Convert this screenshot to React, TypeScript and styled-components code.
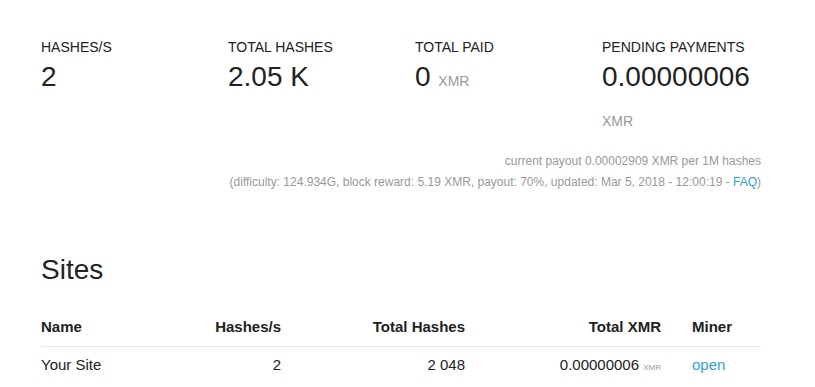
import styled, { createGlobalStyle } from "styled-components";

const GlobalStyle = createGlobalStyle`
    body {
        margin: 0;
        background: #fff;
        font-family: "Liberation Sans", Arial, sans-serif;
        font-size: 14px;
        line-height: 20px;
        color: #222;
    }
`;

const Page = styled.div`
    width: 720px;
    padding: 37px 0 0 41px;
`;

const Stats = styled.div`
    display: grid;
    grid-template-columns: 187px 187px 187px 187px;
    margin-right: -28px;
`;

const Stat = styled.div`
    padding-right: 15px;
`;

const Label = styled.div`
    font-size: 14px;
    line-height: 20px;
    text-transform: uppercase;
`;

const Value = styled.div`
    font-size: 28px;
    line-height: 40px;
`;

const Unit = styled.small<{ $size?: number }>`
    font-size: ${(p) => p.$size ?? 14}px;
    color: #999;
`;

const Payout = styled.div`
    margin-top: 10px;
    text-align: right;
    font-size: 12px;
    line-height: 21px;
    color: #999;
`;

const Link = styled.a`
    color: #2f9de2;
    text-decoration: none;
`;

const Heading = styled.h2`
    margin: 57px 0 0;
    font-size: 28px;
    font-weight: normal;
    line-height: 40px;
`;

const Table = styled.div`
    margin-top: 19px;
    font-size: 15px;
`;

const Row = styled.div<{ $head?: boolean }>`
    display: grid;
    grid-template-columns: 130px 110px 184px 196px 100px;
    border-bottom: 1px solid #e8e8e8;
    font-weight: ${(p) => (p.$head ? "bold" : "normal")};
`;

const Cell = styled.div<{ $align?: "left" | "right"; $indent?: number; $head?: boolean }>`
    padding: 8px 0 ${(p) => (p.$head ? 9 : 10)}px ${(p) => p.$indent ?? 0}px;
    text-align: ${(p) => p.$align ?? "left"};
    white-space: nowrap;
`;

const stats = [
    { label: "Hashes/s", value: "2" },
    { label: "Total Hashes", value: "2.05 K" },
    { label: "Total Paid", value: "0", unit: true },
    { label: "Pending Payments", value: "0.00000006", unit: true },
];

export default function App() {
    return (
        <>
            <GlobalStyle />
            <Page>
                <Stats>
                    {stats.map((s) => (
                        <Stat key={s.label}>
                            <Label>{s.label}</Label>
                            <Value>
                                {s.value}
                                {s.unit && <> <Unit>XMR</Unit></>}
                            </Value>
                        </Stat>
                    ))}
                </Stats>
                <Payout>
                    current payout 0.00002909 XMR per 1M hashes
                    <br />
                    (difficulty: 124.934G, block reward: 5.19 XMR, payout: 70%,
                    updated: Mar 5, 2018 - 12:00:19 - <Link href="#">FAQ</Link>)
                </Payout>
                <Heading>Sites</Heading>
                <Table>
                    <Row $head>
                        <Cell $head>Name</Cell>
                        <Cell $head $align="right">Hashes/s</Cell>
                        <Cell $head $align="right">Total Hashes</Cell>
                        <Cell $head $align="right">Total XMR</Cell>
                        <Cell $head $indent={31}>Miner</Cell>
                    </Row>
                    <Row>
                        <Cell>Your Site</Cell>
                        <Cell $align="right">2</Cell>
                        <Cell $align="right">2 048</Cell>
                        <Cell $align="right">
                            0.00000006 <Unit $size={8}>XMR</Unit>
                        </Cell>
                        <Cell $indent={31}>
                            <Link href="#">open</Link>
                        </Cell>
                    </Row>
                </Table>
            </Page>
        </>
    );
}
